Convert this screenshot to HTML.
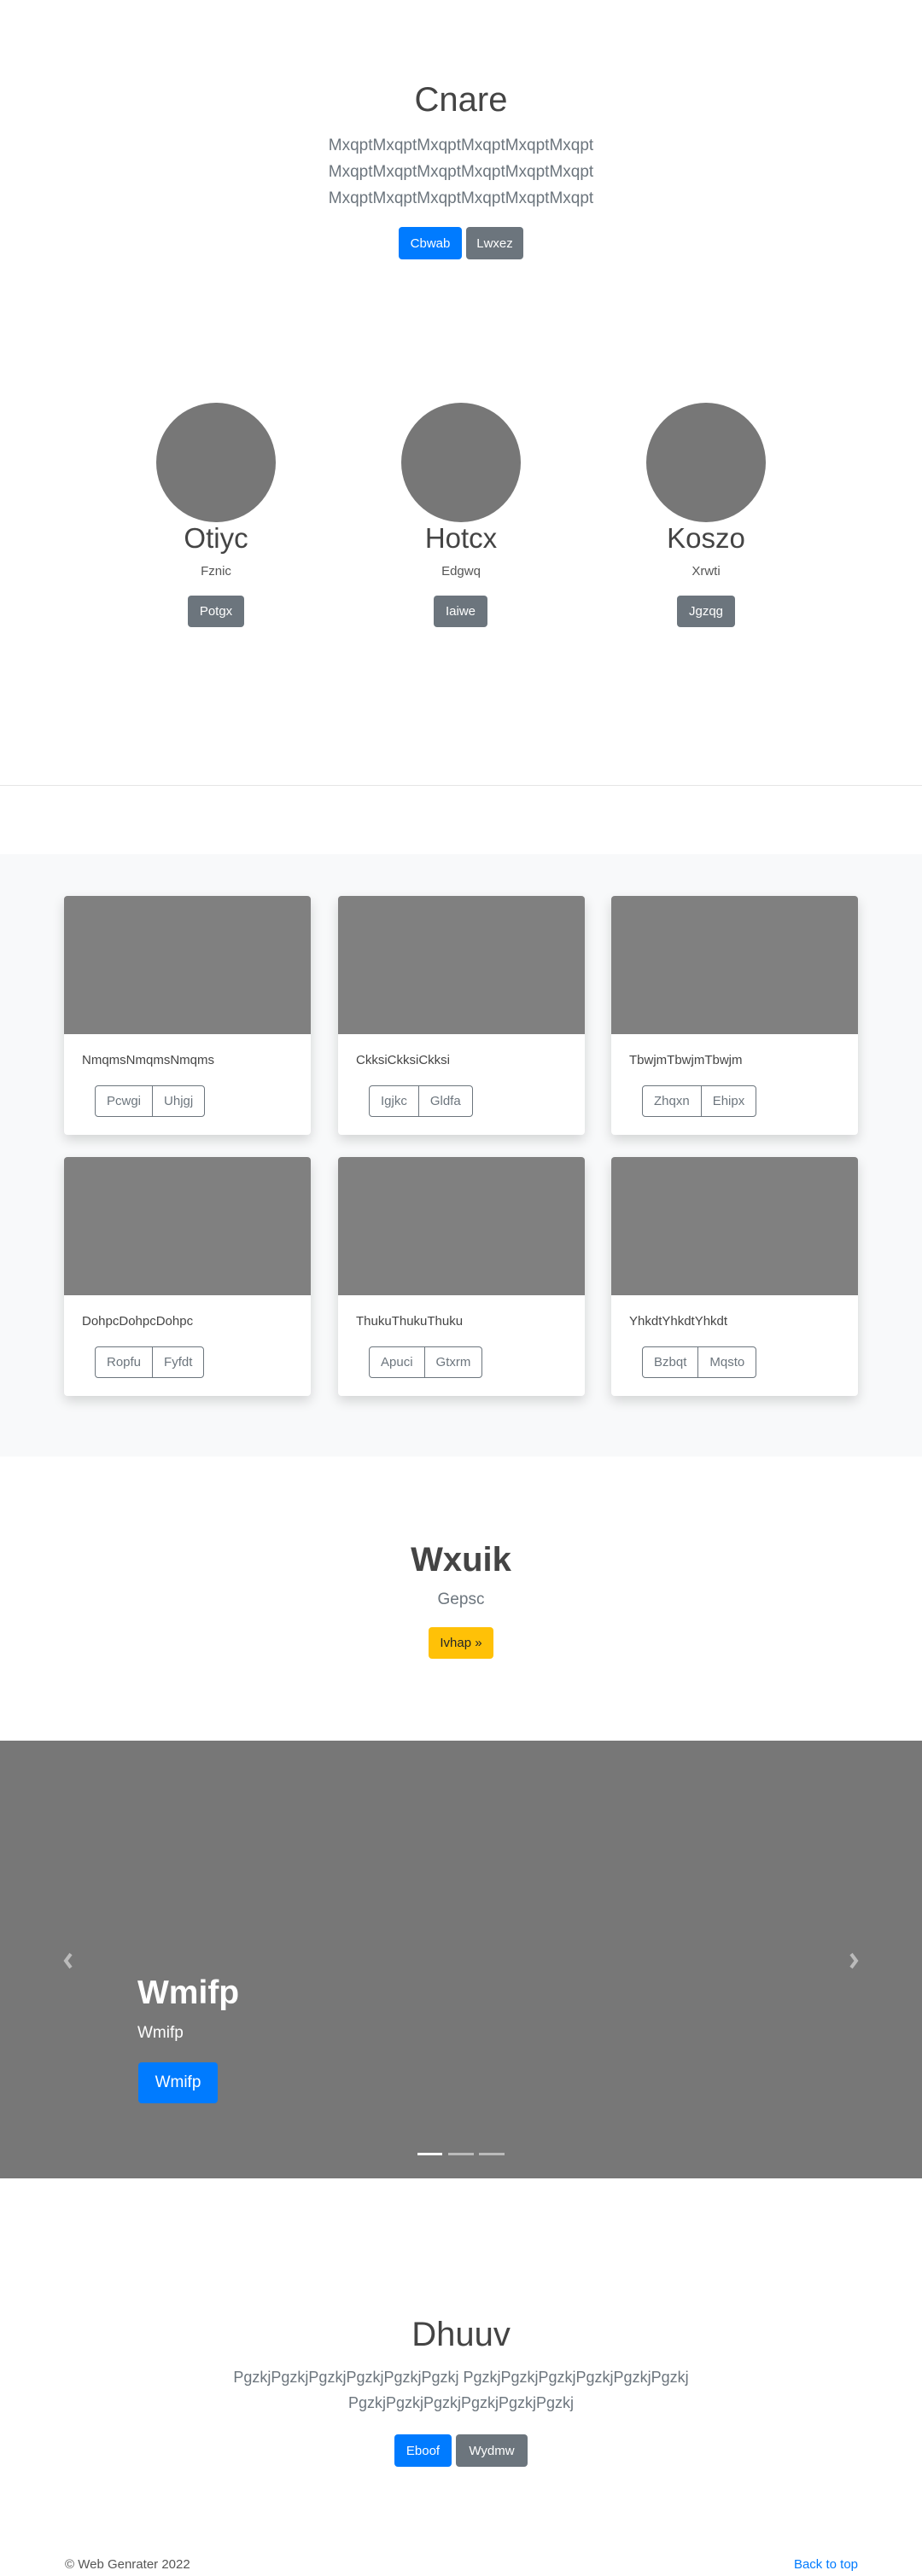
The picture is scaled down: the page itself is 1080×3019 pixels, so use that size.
<!DOCTYPE html>
<html><head><meta charset="utf-8"><style>
*{box-sizing:border-box;margin:0;padding:0}
body{width:1080px;height:3019px;position:relative;background:#fff;font-family:"Liberation Sans",sans-serif;color:#212529;overflow:hidden}
.a{position:absolute}
.c{text-align:center;left:0;width:1080px}
.btn{position:absolute;color:#fff;border-radius:4px;font-size:15px;display:flex;align-items:center;justify-content:center}
.blue{background:#007bff}.gray{background:#6c757d}
.circ{position:absolute;width:140px;height:140px;border-radius:50%;background:#777;top:472px}
.card{position:absolute;width:289px;background:#fff;border-radius:4px;box-shadow:0 6px 14px rgba(0,0,0,.15);overflow:hidden}
.card .img{height:162px;background:#808080}
.card .t{position:absolute;left:21px;top:22px;font-size:15px;color:#444}
.card .bg{position:absolute;left:36px;top:60px;height:37px;display:flex;border:1px solid #6c757d;border-radius:4px}
.card .bg span{padding:0 13px;display:flex;align-items:center;font-size:15px;color:#6c757d}
.card .bg span+span{border-left:1px solid #6c757d}
</style></head><body>
<div class="a c" style="top:95px;font-size:40px;font-weight:300;color:#444">Cnare</div>
<div class="a c" style="top:155px;font-size:19px;line-height:31px;color:#6c757d;font-weight:300">MxqptMxqptMxqptMxqptMxqptMxqpt<br>MxqptMxqptMxqptMxqptMxqptMxqpt<br>MxqptMxqptMxqptMxqptMxqptMxqpt</div>
<div class="btn blue" style="left:467px;top:266px;width:74px;height:38px">Cbwab</div>
<div class="btn gray" style="left:546px;top:266px;width:67px;height:38px">Lwxez</div>

<div class="circ" style="left:183px"></div>
<div class="circ" style="left:470px"></div>
<div class="circ" style="left:757px"></div>
<div class="a" style="left:153px;width:200px;text-align:center;top:612px;font-size:33px;color:#444">Otiyc</div>
<div class="a" style="left:440px;width:200px;text-align:center;top:612px;font-size:33px;color:#444">Hotcx</div>
<div class="a" style="left:727px;width:200px;text-align:center;top:612px;font-size:33px;color:#444">Koszo</div>
<div class="a" style="left:153px;width:200px;text-align:center;top:661px;font-size:15px;color:#555">Fznic</div>
<div class="a" style="left:440px;width:200px;text-align:center;top:661px;font-size:15px;color:#555">Edgwq</div>
<div class="a" style="left:727px;width:200px;text-align:center;top:661px;font-size:15px;color:#555">Xrwti</div>
<div class="btn gray" style="left:220px;top:698px;width:66px;height:37px">Potgx</div>
<div class="btn gray" style="left:508px;top:698px;width:63px;height:37px">Iaiwe</div>
<div class="btn gray" style="left:793px;top:698px;width:68px;height:37px">Jgzqg</div>

<div class="a" style="left:0;top:920px;width:1080px;height:1px;background:#e5e5e5"></div>
<div class="a" style="left:0;top:1001px;width:1080px;height:706px;background:#f8f9fa"></div>

<div class="card" style="left:75px;top:1050px;height:280px"><div class="img"></div><div style="position:relative"><div class="t">NmqmsNmqmsNmqms</div><div class="bg"><span>Pcwgi</span><span>Uhjgj</span></div></div></div>
<div class="card" style="left:396px;top:1050px;height:280px"><div class="img"></div><div style="position:relative"><div class="t">CkksiCkksiCkksi</div><div class="bg"><span>Igjkc</span><span>Gldfa</span></div></div></div>
<div class="card" style="left:716px;top:1050px;height:280px"><div class="img"></div><div style="position:relative"><div class="t">TbwjmTbwjmTbwjm</div><div class="bg"><span>Zhqxn</span><span>Ehipx</span></div></div></div>
<div class="card" style="left:75px;top:1356px;height:280px"><div class="img"></div><div style="position:relative"><div class="t">DohpcDohpcDohpc</div><div class="bg"><span>Ropfu</span><span>Fyfdt</span></div></div></div>
<div class="card" style="left:396px;top:1356px;height:280px"><div class="img"></div><div style="position:relative"><div class="t">ThukuThukuThuku</div><div class="bg"><span>Apuci</span><span>Gtxrm</span></div></div></div>
<div class="card" style="left:716px;top:1356px;height:280px"><div class="img"></div><div style="position:relative"><div class="t">YhkdtYhkdtYhkdt</div><div class="bg"><span>Bzbqt</span><span>Mqsto</span></div></div></div>

<div class="a c" style="top:1806px;font-size:40px;font-weight:bold;color:#444">Wxuik</div>
<div class="a c" style="top:1864px;font-size:19px;color:#6c757d">Gepsc</div>
<div class="btn" style="left:502px;top:1907px;width:76px;height:37px;background:#ffc107;color:#212529">Ivhap »</div>

<div class="a" style="left:0;top:2040px;width:1080px;height:513px;background:#777"></div>
<svg class="a" style="left:72px;top:2287px" width="16" height="22" viewBox="0 0 16 22"><path d="M11 3L5 11l6 8" stroke="#bbb" stroke-width="4" fill="none"/></svg>
<svg class="a" style="left:992px;top:2287px" width="16" height="22" viewBox="0 0 16 22"><path d="M5 3l6 8-6 8" stroke="#bbb" stroke-width="4" fill="none"/></svg>
<div class="a" style="left:161px;top:2314px;font-size:39px;font-weight:bold;color:#fff">Wmifp</div>
<div class="a" style="left:161px;top:2372px;font-size:19px;color:#fff">Wmifp</div>
<div class="btn blue" style="left:162px;top:2417px;width:93px;height:48px;font-size:19px">Wmifp</div>
<div class="a" style="left:489px;top:2523px;width:29px;height:3px;background:#fff"></div>
<div class="a" style="left:525px;top:2523px;width:30px;height:3px;background:#bbb"></div>
<div class="a" style="left:561px;top:2523px;width:30px;height:3px;background:#bbb"></div>

<div class="a c" style="top:2714px;font-size:40px;font-weight:300;color:#444">Dhuuv</div>
<div class="a c" style="top:2771px;font-size:18px;line-height:30px;color:#6c757d;font-weight:300">PgzkjPgzkjPgzkjPgzkjPgzkjPgzkj PgzkjPgzkjPgzkjPgzkjPgzkjPgzkj<br>PgzkjPgzkjPgzkjPgzkjPgzkjPgzkj</div>
<div class="btn blue" style="left:462px;top:2853px;width:67px;height:38px">Eboof</div>
<div class="btn gray" style="left:534px;top:2853px;width:84px;height:38px">Wydmw</div>

<div class="a" style="left:76px;top:2997px;font-size:15px;color:#555">© Web Genrater 2022</div>
<div class="a" style="right:75px;top:2997px;font-size:15px;color:#007bff">Back to top</div>
</body></html>
